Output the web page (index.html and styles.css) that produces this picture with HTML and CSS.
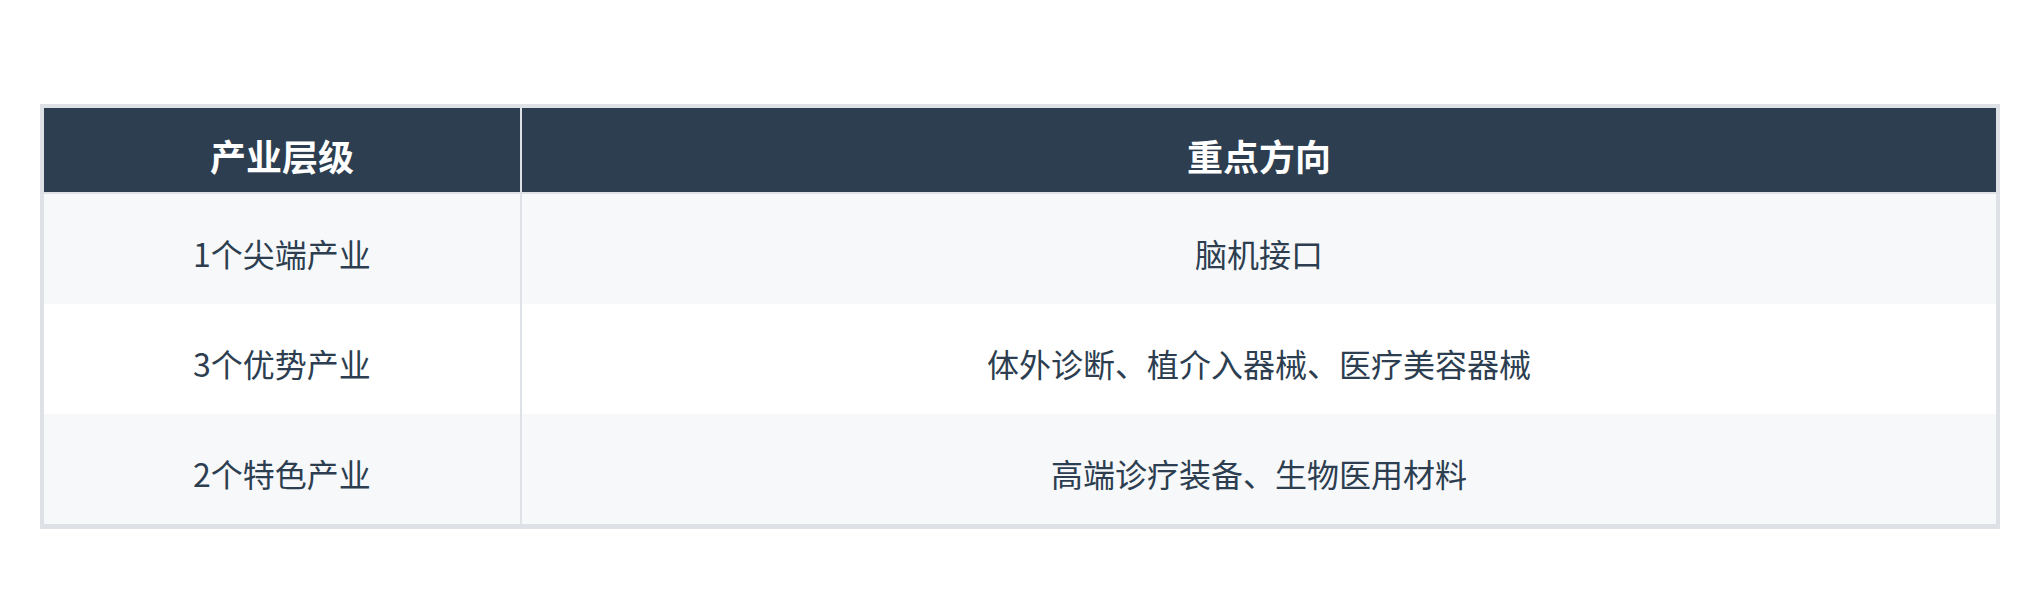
FILE: index.html
```html
<!DOCTYPE html>
<html lang="zh-CN">
<head>
<meta charset="utf-8">
<title>产业层级</title>
<link rel="stylesheet" href="styles.css">
</head>
<body>
<div class="page">
  <table class="industry-table">
    <colgroup>
      <col class="col-level">
      <col class="col-focus">
    </colgroup>
    <thead>
      <tr>
        <th class="cell-first">产业层级</th>
        <th>重点方向</th>
      </tr>
    </thead>
    <tbody>
      <tr class="row-alt">
        <td class="cell-first">1个尖端产业</td>
        <td>脑机接口</td>
      </tr>
      <tr>
        <td class="cell-first">3个优势产业</td>
        <td>体外诊断、植介入器械、医疗美容器械</td>
      </tr>
      <tr class="row-alt">
        <td class="cell-first">2个特色产业</td>
        <td>高端诊疗装备、生物医用材料</td>
      </tr>
    </tbody>
  </table>
</div>
</body>
</html>
```

FILE: styles.css
```css
html, body {
  margin: 0;
  padding: 0;
  background: #ffffff;
}

.page {
  padding: 104px 40px 0 40px;
  font-family: "Noto Sans CJK SC", "Noto Sans", sans-serif;
  color: #2c3e50;
}

.industry-table {
  width: 100%;
  table-layout: fixed;
  border-collapse: separate;
  border-spacing: 0;
  border: 4px solid #dee2e6;
  border-bottom-width: 5px;
}

.col-level {
  width: 478px;
}

.industry-table th {
  background: #2c3e50;
  color: #ffffff;
  font-size: 36px;
  font-weight: 700;
  line-height: 54px;
  padding: 20px 0 10px 0;
  text-align: center;
  border-bottom: 2px solid #dee2e6;
}

.industry-table td {
  font-size: 32px;
  font-weight: 400;
  line-height: 48px;
  padding: 35px 0 27px 0;
  text-align: center;
  background: #ffffff;
}

.industry-table .row-alt td {
  background: #f7f8fa;
}

.industry-table .cell-first {
  border-right: 2px solid #dee2e6;
}
```
